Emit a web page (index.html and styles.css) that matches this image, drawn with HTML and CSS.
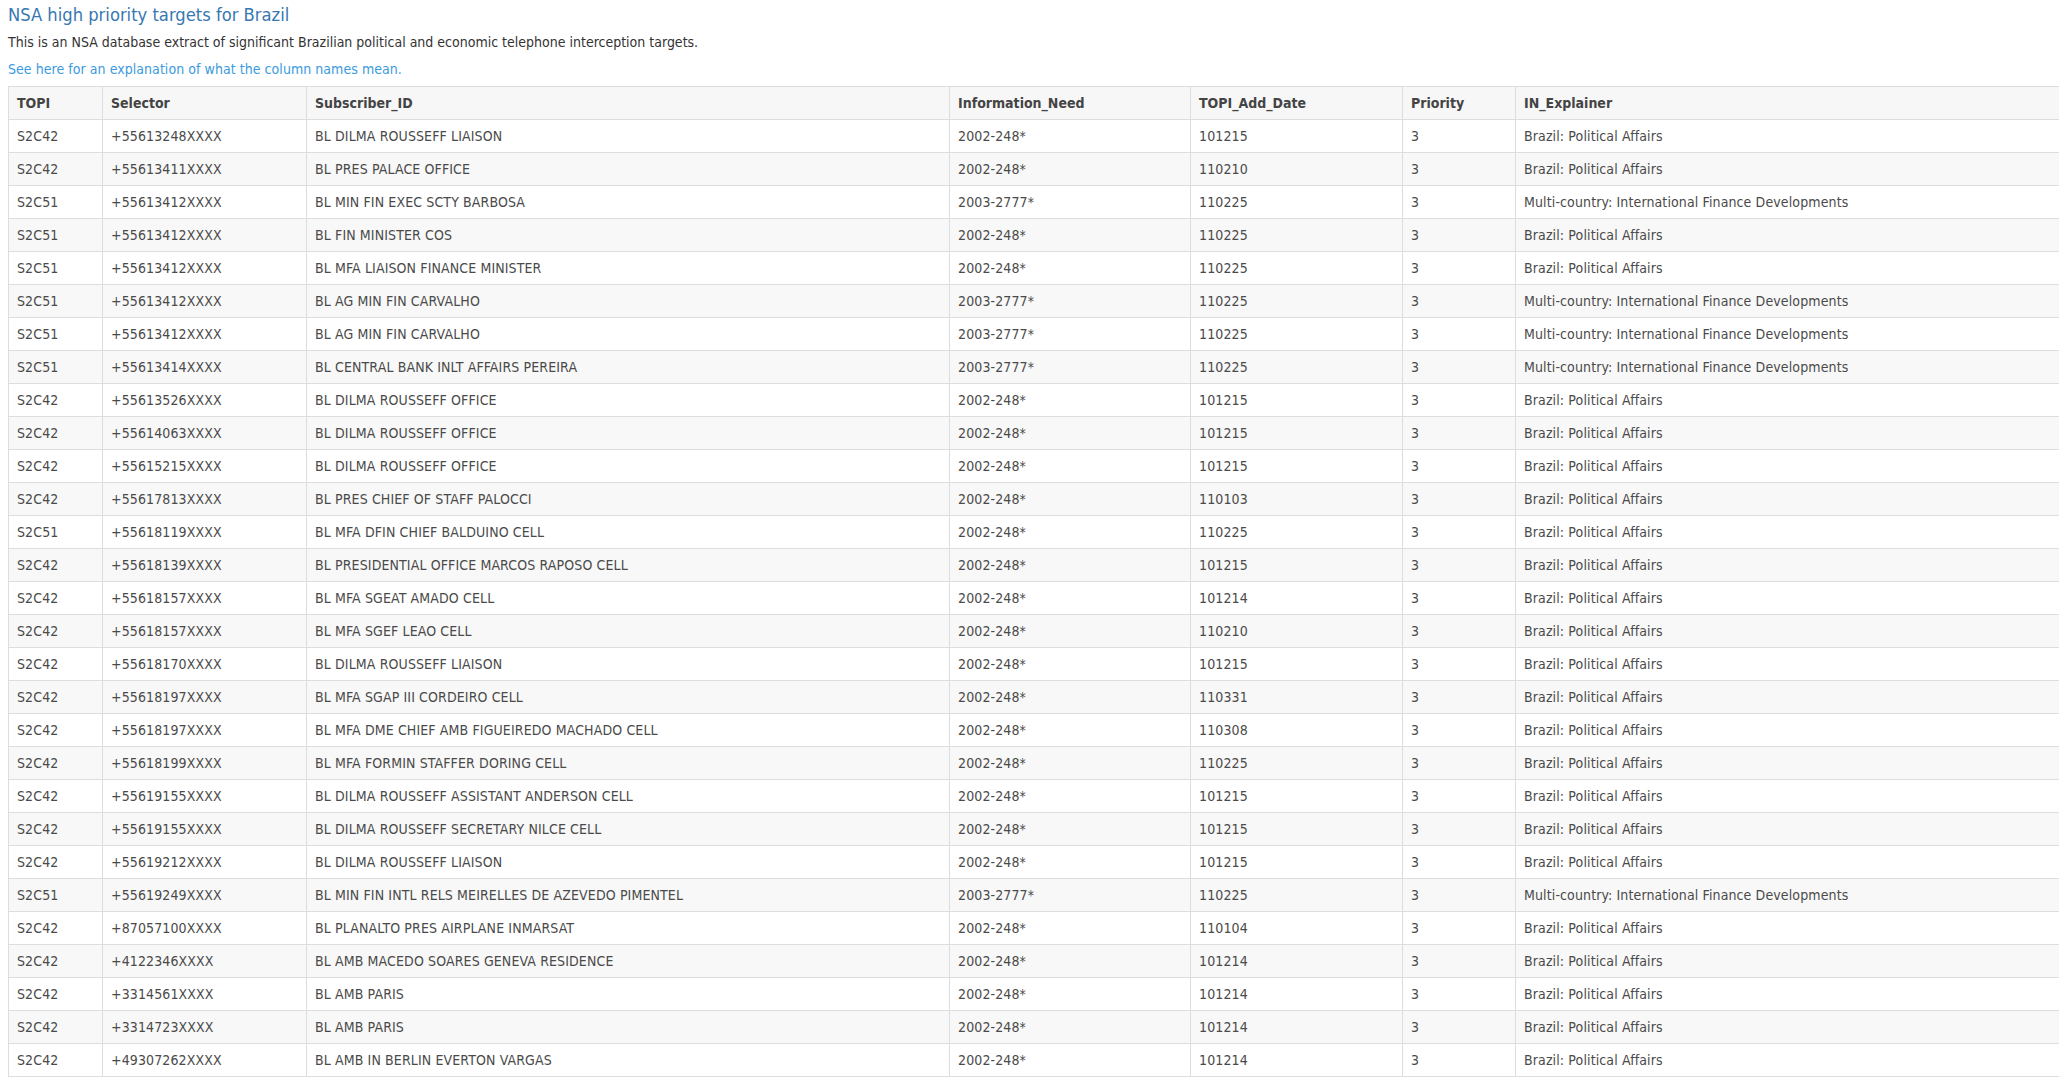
FILE: index.html
```html
<!DOCTYPE html>
<html lang="en">
<head>
<meta charset="utf-8">
<title>NSA high priority targets for Brazil</title>
<link rel="stylesheet" href="styles.css">
</head>
<body>
<h1 class="title">NSA high priority targets for Brazil</h1>
<p class="intro">This is an NSA database extract of significant Brazilian political and economic telephone interception targets.</p>
<p class="explain"><a class="explain-link" href="#">See here for an explanation of what the column names mean.</a></p>
<table class="targets">
<colgroup>
<col class="c-topi"><col class="c-sel"><col class="c-sub"><col class="c-need"><col class="c-date"><col class="c-prio"><col class="c-expl">
</colgroup>
<thead>
<tr><th>TOPI</th><th>Selector</th><th>Subscriber_ID</th><th>Information_Need</th><th>TOPI_Add_Date</th><th>Priority</th><th>IN_Explainer</th></tr>
</thead>
<tbody>
<tr><td>S2C42</td><td>+55613248XXXX</td><td>BL DILMA ROUSSEFF LIAISON</td><td>2002-248*</td><td>101215</td><td>3</td><td>Brazil: Political Affairs</td></tr>
<tr><td>S2C42</td><td>+55613411XXXX</td><td>BL PRES PALACE OFFICE</td><td>2002-248*</td><td>110210</td><td>3</td><td>Brazil: Political Affairs</td></tr>
<tr><td>S2C51</td><td>+55613412XXXX</td><td>BL MIN FIN EXEC SCTY BARBOSA</td><td>2003-2777*</td><td>110225</td><td>3</td><td>Multi-country: International Finance Developments</td></tr>
<tr><td>S2C51</td><td>+55613412XXXX</td><td>BL FIN MINISTER COS</td><td>2002-248*</td><td>110225</td><td>3</td><td>Brazil: Political Affairs</td></tr>
<tr><td>S2C51</td><td>+55613412XXXX</td><td>BL MFA LIAISON FINANCE MINISTER</td><td>2002-248*</td><td>110225</td><td>3</td><td>Brazil: Political Affairs</td></tr>
<tr><td>S2C51</td><td>+55613412XXXX</td><td>BL AG MIN FIN CARVALHO</td><td>2003-2777*</td><td>110225</td><td>3</td><td>Multi-country: International Finance Developments</td></tr>
<tr><td>S2C51</td><td>+55613412XXXX</td><td>BL AG MIN FIN CARVALHO</td><td>2003-2777*</td><td>110225</td><td>3</td><td>Multi-country: International Finance Developments</td></tr>
<tr><td>S2C51</td><td>+55613414XXXX</td><td>BL CENTRAL BANK INLT AFFAIRS PEREIRA</td><td>2003-2777*</td><td>110225</td><td>3</td><td>Multi-country: International Finance Developments</td></tr>
<tr><td>S2C42</td><td>+55613526XXXX</td><td>BL DILMA ROUSSEFF OFFICE</td><td>2002-248*</td><td>101215</td><td>3</td><td>Brazil: Political Affairs</td></tr>
<tr><td>S2C42</td><td>+55614063XXXX</td><td>BL DILMA ROUSSEFF OFFICE</td><td>2002-248*</td><td>101215</td><td>3</td><td>Brazil: Political Affairs</td></tr>
<tr><td>S2C42</td><td>+55615215XXXX</td><td>BL DILMA ROUSSEFF OFFICE</td><td>2002-248*</td><td>101215</td><td>3</td><td>Brazil: Political Affairs</td></tr>
<tr><td>S2C42</td><td>+55617813XXXX</td><td>BL PRES CHIEF OF STAFF PALOCCI</td><td>2002-248*</td><td>110103</td><td>3</td><td>Brazil: Political Affairs</td></tr>
<tr><td>S2C51</td><td>+55618119XXXX</td><td>BL MFA DFIN CHIEF BALDUINO CELL</td><td>2002-248*</td><td>110225</td><td>3</td><td>Brazil: Political Affairs</td></tr>
<tr><td>S2C42</td><td>+55618139XXXX</td><td>BL PRESIDENTIAL OFFICE MARCOS RAPOSO CELL</td><td>2002-248*</td><td>101215</td><td>3</td><td>Brazil: Political Affairs</td></tr>
<tr><td>S2C42</td><td>+55618157XXXX</td><td>BL MFA SGEAT AMADO CELL</td><td>2002-248*</td><td>101214</td><td>3</td><td>Brazil: Political Affairs</td></tr>
<tr><td>S2C42</td><td>+55618157XXXX</td><td>BL MFA SGEF LEAO CELL</td><td>2002-248*</td><td>110210</td><td>3</td><td>Brazil: Political Affairs</td></tr>
<tr><td>S2C42</td><td>+55618170XXXX</td><td>BL DILMA ROUSSEFF LIAISON</td><td>2002-248*</td><td>101215</td><td>3</td><td>Brazil: Political Affairs</td></tr>
<tr><td>S2C42</td><td>+55618197XXXX</td><td>BL MFA SGAP III CORDEIRO CELL</td><td>2002-248*</td><td>110331</td><td>3</td><td>Brazil: Political Affairs</td></tr>
<tr><td>S2C42</td><td>+55618197XXXX</td><td>BL MFA DME CHIEF AMB FIGUEIREDO MACHADO CELL</td><td>2002-248*</td><td>110308</td><td>3</td><td>Brazil: Political Affairs</td></tr>
<tr><td>S2C42</td><td>+55618199XXXX</td><td>BL MFA FORMIN STAFFER DORING CELL</td><td>2002-248*</td><td>110225</td><td>3</td><td>Brazil: Political Affairs</td></tr>
<tr><td>S2C42</td><td>+55619155XXXX</td><td>BL DILMA ROUSSEFF ASSISTANT ANDERSON CELL</td><td>2002-248*</td><td>101215</td><td>3</td><td>Brazil: Political Affairs</td></tr>
<tr><td>S2C42</td><td>+55619155XXXX</td><td>BL DILMA ROUSSEFF SECRETARY NILCE CELL</td><td>2002-248*</td><td>101215</td><td>3</td><td>Brazil: Political Affairs</td></tr>
<tr><td>S2C42</td><td>+55619212XXXX</td><td>BL DILMA ROUSSEFF LIAISON</td><td>2002-248*</td><td>101215</td><td>3</td><td>Brazil: Political Affairs</td></tr>
<tr><td>S2C51</td><td>+55619249XXXX</td><td>BL MIN FIN INTL RELS MEIRELLES DE AZEVEDO PIMENTEL</td><td>2003-2777*</td><td>110225</td><td>3</td><td>Multi-country: International Finance Developments</td></tr>
<tr><td>S2C42</td><td>+87057100XXXX</td><td>BL PLANALTO PRES AIRPLANE INMARSAT</td><td>2002-248*</td><td>110104</td><td>3</td><td>Brazil: Political Affairs</td></tr>
<tr><td>S2C42</td><td>+4122346XXXX</td><td>BL AMB MACEDO SOARES GENEVA RESIDENCE</td><td>2002-248*</td><td>101214</td><td>3</td><td>Brazil: Political Affairs</td></tr>
<tr><td>S2C42</td><td>+3314561XXXX</td><td>BL AMB PARIS</td><td>2002-248*</td><td>101214</td><td>3</td><td>Brazil: Political Affairs</td></tr>
<tr><td>S2C42</td><td>+3314723XXXX</td><td>BL AMB PARIS</td><td>2002-248*</td><td>101214</td><td>3</td><td>Brazil: Political Affairs</td></tr>
<tr><td>S2C42</td><td>+49307262XXXX</td><td>BL AMB IN BERLIN EVERTON VARGAS</td><td>2002-248*</td><td>101214</td><td>3</td><td>Brazil: Political Affairs</td></tr>
</tbody>
</table>
</body>
</html>
```

FILE: styles.css
```css
html {
  overflow: hidden;
}

body {
  margin: 0;
  padding: 4px 8px 0 8px;
  background: #ffffff;
  color: #333333;
  font-family: "DejaVu Sans Condensed", "DejaVu Sans", Verdana, sans-serif;
  font-stretch: semi-condensed;
  font-size: 14px;
}

.title {
  margin: 0;
  font-size: 18.2px;
  line-height: 22px;
  font-weight: normal;
  color: #3778b1;
}

.intro {
  margin: 6px 0 0 0;
  line-height: 20px;
  color: #333333;
}

.explain {
  margin: 7px 0 0 0;
  line-height: 20px;
}

.explain-link {
  color: #3b9ae0;
  text-decoration: none;
  letter-spacing: 0.05px;
}

.targets {
  margin-top: 7px;
  border-collapse: collapse;
  table-layout: fixed;
  width: 2120px;
}

.c-topi { width: 94px; }
.c-sel { width: 204px; }
.c-sub { width: 643px; }
.c-need { width: 241px; }
.c-date { width: 212px; }
.c-prio { width: 113px; }
.c-expl { width: 613px; }

.targets th,
.targets td {
  border: 1px solid #dddddd;
  padding: 7px 8px;
  line-height: 18px;
  text-align: left;
  white-space: nowrap;
  overflow: hidden;
}

.targets th {
  background: #f7f7f7;
  color: #444444;
  font-weight: bold;
}

.targets td {
  color: #4a4a4a;
  letter-spacing: 0.12px;
}

.targets tbody tr:nth-child(even) td {
  background: #f8f8f8;
}
```
